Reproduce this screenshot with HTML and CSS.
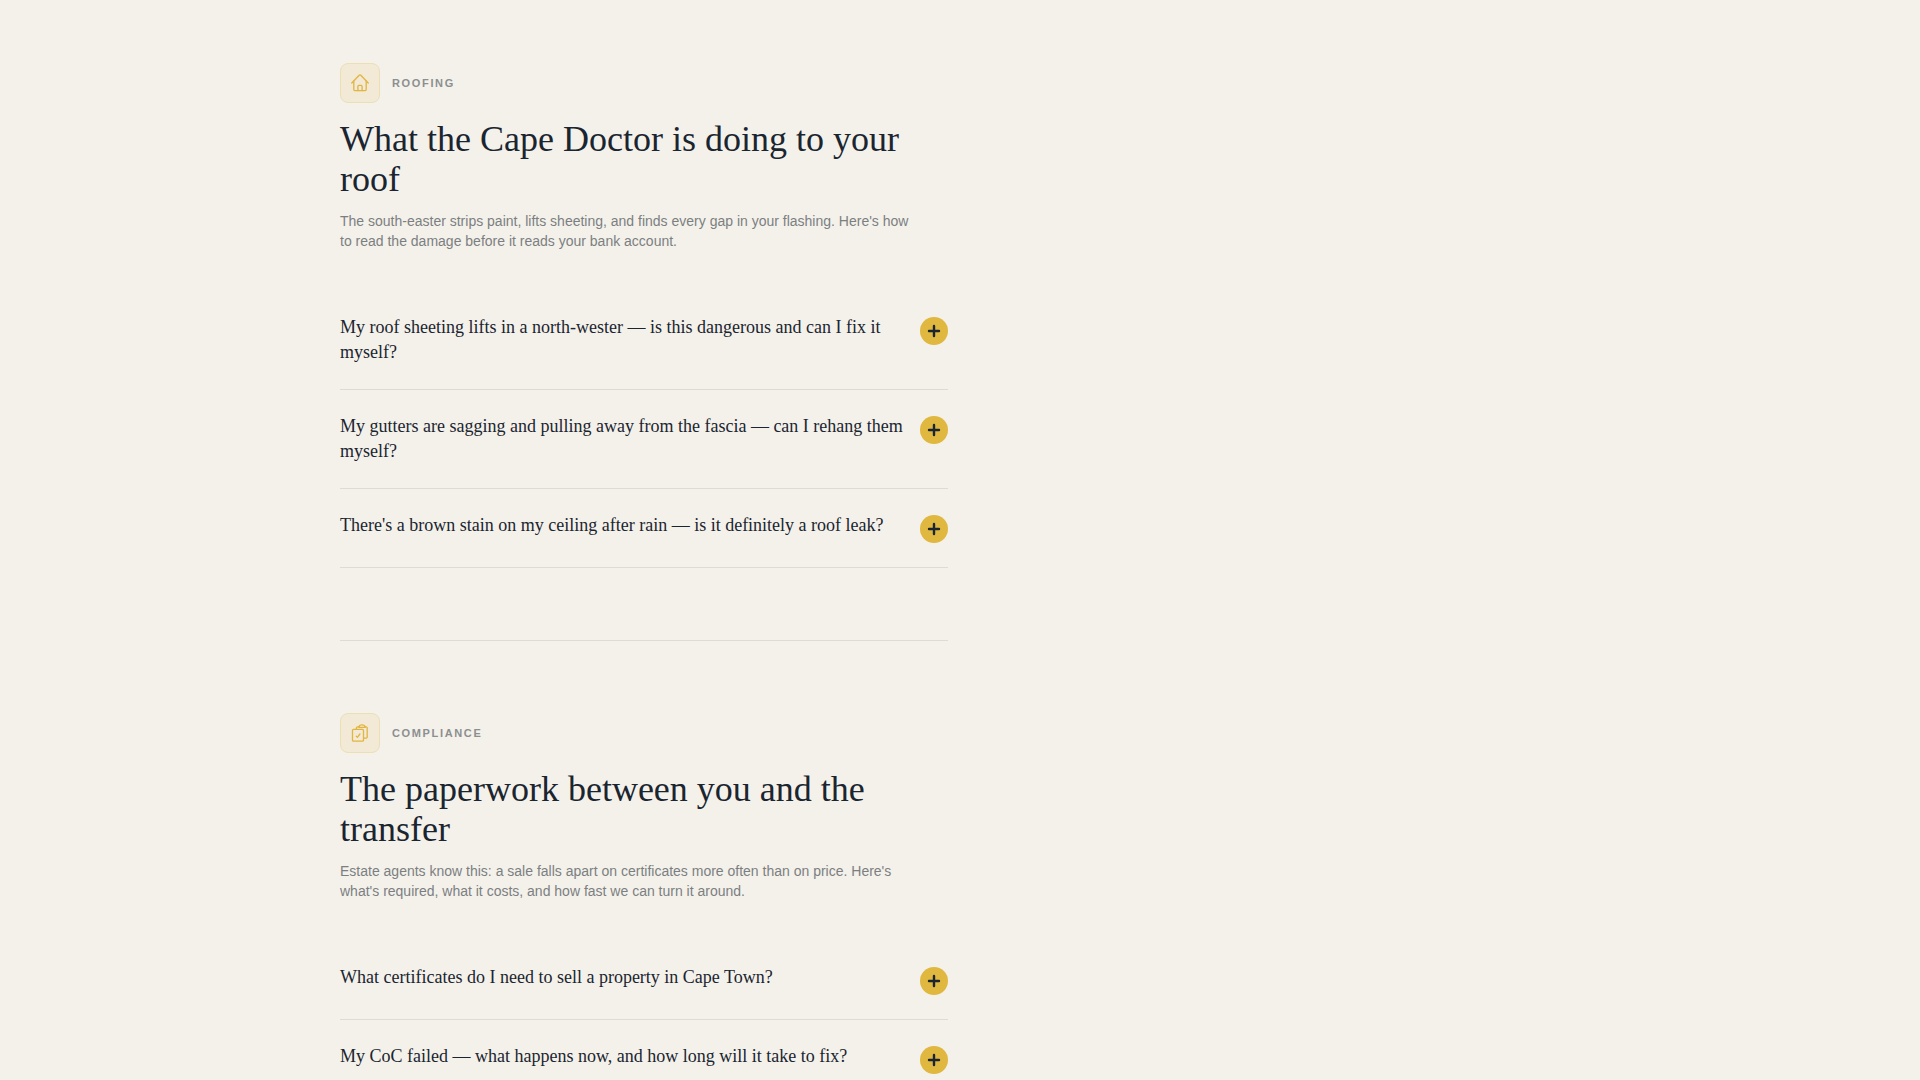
FILE: index.html
```
<!DOCTYPE html>
<html lang="en">
<head>
  <meta charset="UTF-8">
  <meta name="viewport" content="width=device-width, initial-scale=1.0">
  <title>Home Repair Questions</title>
  <link rel="stylesheet" href="styles.css">
</head>
<body>

  <main class="container">

    <section class="topic">
      <div class="topic-label">
        <span class="topic-icon">
          <svg width="20" height="20" viewBox="0 0 20 20" aria-hidden="true">
            <path d="M1.8 10 L9.2 2.3 a1.1 1.1 0 0 1 1.6 0 L18.2 10"/>
            <path d="M3.8 8.2 V16.6 a1 1 0 0 0 1 1 H15.2 a1 1 0 0 0 1 -1 V8.2"/>
            <path d="M7.9 17.6 V13.4 a1 1 0 0 1 1 -1 H11.1 a1 1 0 0 1 1 1 V17.6"/>
          </svg>
        </span>
        <span class="topic-name">Roofing</span>
      </div>
      <h2>What the Cape Doctor is doing to your roof</h2>
      <p class="intro">The south-easter strips paint, lifts sheeting, and finds every gap in your flashing. Here's how to read the damage before it reads your bank account.</p>

      <div class="questions">
        <button type="button" class="question">
          <span>My roof sheeting lifts in a north-wester — is this dangerous and can I fix it myself?</span>
          <span class="plus"><svg width="14" height="14" viewBox="0 0 14 14" aria-hidden="true"><path d="M7 2 V12 M2 7 H12"/></svg></span>
        </button>
        <button type="button" class="question">
          <span>My gutters are sagging and pulling away from the fascia — can I rehang them myself?</span>
          <span class="plus"><svg width="14" height="14" viewBox="0 0 14 14" aria-hidden="true"><path d="M7 2 V12 M2 7 H12"/></svg></span>
        </button>
        <button type="button" class="question">
          <span>There's a brown stain on my ceiling after rain — is it definitely a roof leak?</span>
          <span class="plus"><svg width="14" height="14" viewBox="0 0 14 14" aria-hidden="true"><path d="M7 2 V12 M2 7 H12"/></svg></span>
        </button>
      </div>
    </section>

    <section class="topic">
      <div class="topic-label">
        <span class="topic-icon">
          <svg width="20" height="20" viewBox="0 0 20 20" aria-hidden="true">
            <rect x="2.5" y="6.4" width="11" height="11.8" rx="1"/>
            <path d="M6.4 6.4 V5 a1.2 1.2 0 0 1 1.2 -1.2 H9 M15 3.8 h1 a1.2 1.2 0 0 1 1.2 1.2 V14 a1.2 1.2 0 0 1 -1.2 1.2 H13.5"/>
            <path d="M8.9 4.4 V3.8 C9.3 1.1 14.7 1.1 15.1 3.8 V4.4 Z"/>
            <path d="M6.2 13.1 L7.4 14.3 L9.9 11"/>
          </svg>
        </span>
        <span class="topic-name">Compliance</span>
      </div>
      <h2>The paperwork between you and the transfer</h2>
      <p class="intro">Estate agents know this: a sale falls apart on certificates more often than on price. Here's what's required, what it costs, and how fast we can turn it around.</p>

      <div class="questions">
        <button type="button" class="question">
          <span>What certificates do I need to sell a property in Cape Town?</span>
          <span class="plus"><svg width="14" height="14" viewBox="0 0 14 14" aria-hidden="true"><path d="M7 2 V12 M2 7 H12"/></svg></span>
        </button>
        <button type="button" class="question">
          <span>My CoC failed — what happens now, and how long will it take to fix?</span>
          <span class="plus"><svg width="14" height="14" viewBox="0 0 14 14" aria-hidden="true"><path d="M7 2 V12 M2 7 H12"/></svg></span>
        </button>
      </div>
    </section>

  </main>

</body>
</html>
```
FILE: styles.css
```
* {
  box-sizing: border-box;
}
body {
  margin: 0;
  background: #f4f1ea;
  color: #1a2530;
  font-family: "Liberation Sans", Arial, sans-serif;
}
/* topics sit in the left half of the content area */
.container {
  display: grid;
  grid-template-columns: 1fr 1fr;
  column-gap: 24px;
  max-width: 1240px;
  margin: 0 auto;
}
.topic {
  grid-column: 1;
  padding: 72px 0;
  border-bottom: 1px solid #dedbd6;
}
.topic:first-child {
  padding-top: 63px;
}
.topic-label {
  display: flex;
  align-items: center;
  gap: 12px;
}
.topic-icon {
  display: flex;
  align-items: center;
  justify-content: center;
  width: 40px;
  height: 40px;
  background: #f2e9d6;
  border: 1px solid #eedfb3;
  border-radius: 8px;
}
.topic-icon svg {
  fill: none;
  stroke: #e2b53f;
  stroke-width: 1.3;
  stroke-linecap: round;
  stroke-linejoin: round;
}
.topic-name {
  font-size: 11px;
  font-weight: bold;
  letter-spacing: 0.15em;
  text-transform: uppercase;
  color: #8b8f90;
}
h2 {
  margin: 16px 0 12px;
  font-family: "Liberation Serif", "Times New Roman", serif;
  font-size: 36px;
  font-weight: normal;
  line-height: 40px;
}
.intro {
  max-width: 580px;
  margin: 0 0 40px;
  font-size: 14px;
  line-height: 20px;
  color: #7b7f82;
}
.question {
  display: flex;
  align-items: flex-start;
  justify-content: space-between;
  gap: 16px;
  width: 100%;
  padding: 24px 0;
  background: none;
  border: none;
  border-bottom: 1px solid #dedbd6;
  font-family: "Liberation Serif", "Times New Roman", serif;
  font-size: 18px;
  line-height: 25px;
  text-align: left;
  color: inherit;
  cursor: pointer;
}
.plus {
  display: flex;
  align-items: center;
  justify-content: center;
  flex-shrink: 0;
  width: 28px;
  height: 28px;
  margin-top: 2px;
  background: #e0b73f;
  border-radius: 50%;
}
.plus svg {
  stroke: #1a2530;
  stroke-width: 2.4;
  stroke-linecap: round;
}
```
